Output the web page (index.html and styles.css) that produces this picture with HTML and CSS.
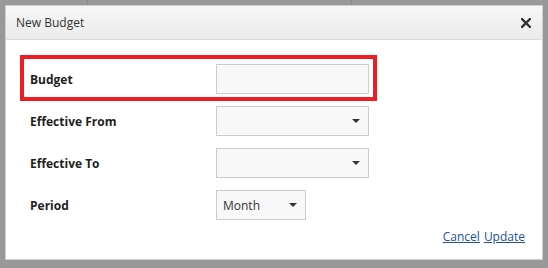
FILE: index.html
```html
<!DOCTYPE html>
<html>
<head>
<meta charset="utf-8">
<link rel="stylesheet" href="styles.css">
</head>
<body>
<div class="backdrop">
  <div class="dialog">
    <div class="header">
      <span class="title">New Budget</span>
      <span class="close" aria-label="Close">
        <svg width="10" height="10" viewBox="0 0 10 10"><path d="M1 1 L9 9 M9 1 L1 9" stroke="#333" stroke-width="2.4" stroke-linecap="square"/></svg>
      </span>
    </div>
    <div class="body">
      <div class="highlight"></div>
      <div class="form">
        <div class="row">
          <label class="label">Budget</label>
          <div class="input"></div>
        </div>
        <div class="row">
          <label class="label">Effective From</label>
          <div class="select wide"><span class="value"></span><span class="caret"></span></div>
        </div>
        <div class="row">
          <label class="label">Effective To</label>
          <div class="select wide"><span class="value"></span><span class="caret"></span></div>
        </div>
        <div class="row">
          <label class="label">Period</label>
          <div class="select narrow"><span class="value">Month</span><span class="caret"></span></div>
        </div>
      </div>
      <div class="footer">
        <a class="link" href="#">Cancel</a> <a class="link" href="#">Update</a>
      </div>
    </div>
  </div>
</div>
</body>
</html>
```

FILE: styles.css
```css
html, body {
  margin: 0;
  padding: 0;
}
body {
  width: 548px;
  height: 268px;
  overflow: hidden;
  font-family: "Open Sans", "Liberation Sans", sans-serif;
  background: #999999;
}
.backdrop {
  width: 548px;
  height: 268px;
  padding: 5px;
  box-sizing: border-box;
  background-color: #999999;
  background-image:
    linear-gradient(to right, transparent 87px, #8a8a8a 87px, #8a8a8a 88px, transparent 88px),
    linear-gradient(to right, transparent 351px, #8a8a8a 351px, #8a8a8a 352px, transparent 352px);
  background-size: 548px 5px;
  background-repeat: no-repeat;
}
.dialog {
  width: 538px;
  height: 255px;
  box-sizing: border-box;
  border: 1px solid #cfcfcf;
  background: #ffffff;
  display: flex;
  flex-direction: column;
}
.header {
  height: 33px;
  border-bottom: 1px solid #dcdcdc;
  background: linear-gradient(to bottom, #f7f7f7, #ebebeb);
  display: flex;
  align-items: center;
  justify-content: space-between;
  padding: 0 11px 0 10px;
}
.title {
  font-size: 12px;
  color: #333333;
  line-height: 16px;
}
.close {
  display: flex;
  width: 10px;
  height: 10px;
}
.body {
  position: relative;
  flex: 1;
  padding: 24px 17px 0 24px;
}
.highlight {
  position: absolute;
  left: 14px;
  top: 15px;
  width: 357px;
  height: 46px;
  box-sizing: border-box;
  border: 4px solid #ee1c25;
}
.form {
  display: flex;
  flex-direction: column;
  gap: 12px;
}
.row {
  display: flex;
  align-items: center;
  height: 30px;
}
.label {
  width: 186px;
  font-size: 12px;
  font-weight: 700;
  color: #1e1e1e;
}
.input, .select {
  height: 30px;
  box-sizing: border-box;
  border: 1px solid #cccccc;
  background: #f8f8f8;
}
.input {
  width: 153px;
}
.select {
  display: flex;
  align-items: center;
  justify-content: space-between;
  padding: 0 8px 0 6px;
}
.wide {
  width: 153px;
}
.narrow {
  width: 90px;
}
.value {
  font-size: 12px;
  color: #333333;
}
.caret {
  width: 0;
  height: 0;
  border-left: 4px solid transparent;
  border-right: 4px solid transparent;
  border-top: 4px solid #333333;
}
.footer {
  display: flex;
  justify-content: flex-end;
  gap: 4px;
  margin-top: 8px;
}
.link {
  font-size: 12px;
  color: #23519b;
  text-decoration: underline;
}
```
